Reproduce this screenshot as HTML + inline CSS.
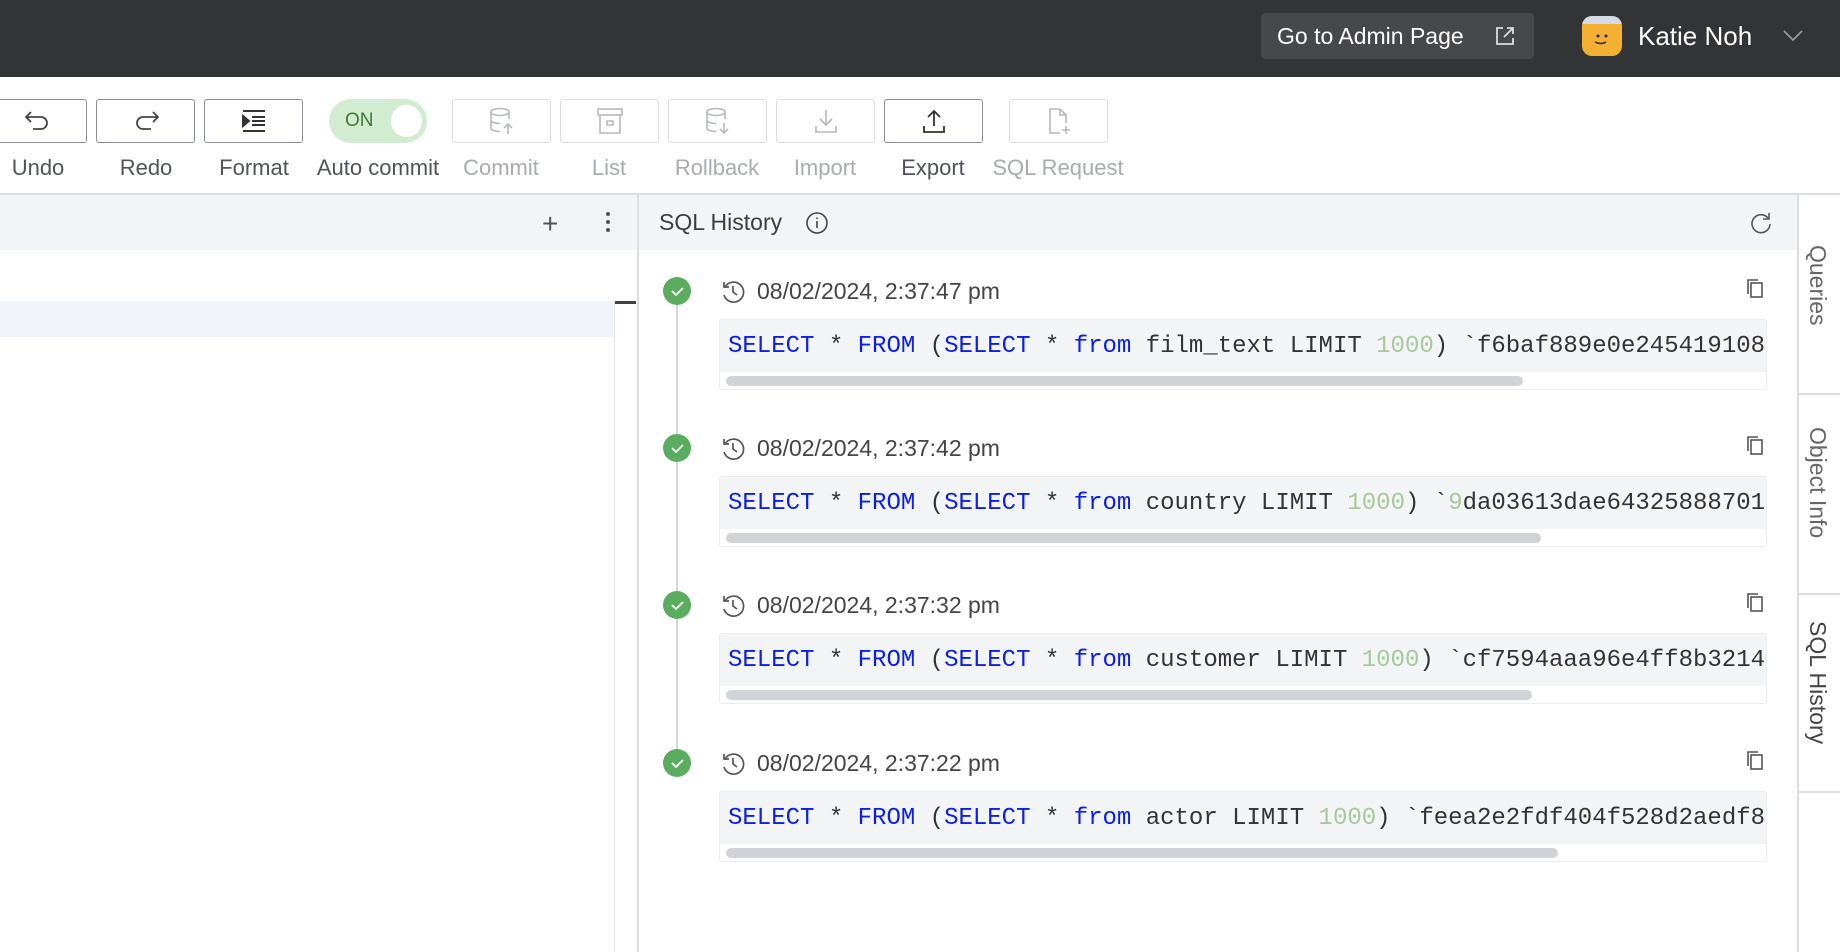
<!DOCTYPE html>
<html><head><meta charset="utf-8"><style>
*{box-sizing:border-box;margin:0;padding:0}
body{width:1840px;height:952px;overflow:hidden;background:#fff;font-family:"Liberation Sans",sans-serif;position:relative;color:#333}
.abs{position:absolute;white-space:nowrap}
.hdr{left:0;top:0;width:1840px;height:77px;background:#333436}
.btn{position:absolute;top:99px;width:99px;height:44px;border:1.5px solid #8a8d93;border-radius:3px;display:flex;align-items:center;justify-content:center}
.btn.dis{border-color:#dcdde0}
.lbl{position:absolute;top:155px;font-size:22px;color:#50535a;text-align:center;width:120px;white-space:nowrap}
.lbl.dis{color:#a8abb0}
.mono{font-family:"Liberation Mono",monospace;font-size:24px;white-space:nowrap}
.kw{color:#0a1ee8}.num{color:#a6c99a}
.date{font-size:23px;color:#444;line-height:28px}
</style></head><body>
<div class="abs hdr"></div>
<div class="abs" style="left:1261px;top:13px;width:273px;height:46px;background:#47484c;border-radius:4px;color:#fff;font-size:23px;line-height:46px;padding-left:16px">Go to Admin Page
<svg class="abs" style="left:233px;top:12px" width="22" height="22" viewBox="0 0 22 22" fill="none" stroke="#ddd" stroke-width="1.8"><path d="M9 3H3v16h16v-6M13 3h6v6M19 3l-9 9"/></svg></div>
<div class="abs" style="left:1582px;top:16px;width:40px;height:40px;border-radius:10px;background:#f3b033;overflow:hidden"><div style="height:8px;background:#d3dbe6"></div>
<svg class="abs" style="left:0;top:0" width="40" height="40"><circle cx="16" cy="20" r="1.5" fill="#222"/><circle cx="24" cy="20" r="1.5" fill="#222"/><path d="M13 26q6 3 11 0" stroke="#222" stroke-width="1.5" fill="none"/></svg></div>
<div class="abs" style="left:1638px;top:18px;color:#fff;font-size:26px;line-height:36px">Katie Noh</div>
<svg class="abs" style="left:1782px;top:28px" width="22" height="14" fill="none" stroke="#999" stroke-width="1.8"><path d="M2 3l9 9 9-9"/></svg>

<div class="btn" style="left:-12px"><svg width="30" height="26" fill="none" stroke="#444" stroke-width="1.8"><path d="M8 4L3 9l5 5M3 9h15a6 6 0 010 12h-8"/></svg></div>
<div class="btn" style="left:96px"><svg width="30" height="26" fill="none" stroke="#444" stroke-width="1.8"><path d="M22 4l5 5-5 5M27 9H12a6 6 0 000 12h8"/></svg></div>
<div class="btn" style="left:204px"><svg width="28" height="26" fill="none" stroke="#333" stroke-width="2"><path d="M3 3h22M12 9h13M12 13h13M12 17h13M3 23h22"/><path d="M3 8l6 5-6 5z" fill="#333"/></svg></div>
<div class="abs" style="left:329px;top:99px;width:98px;height:44px;border-radius:22px;background:#d2ecd2"><span class="abs" style="left:16px;top:11px;font-size:19px;color:#3b7a3b">ON</span><div class="abs" style="left:62px;top:6px;width:31px;height:32px;border-radius:16px;background:#fff"></div></div>
<div class="btn dis" style="left:452px"><svg width="28" height="30" fill="none" stroke="#b5b8bd" stroke-width="1.6"><ellipse cx="12" cy="6" rx="9" ry="3.5"/><path d="M3 6v16c0 2 4 3.5 9 3.5M21 6v7M3 14c0 2 4 3.5 9 3.5M20 28v-10M16 22l4-4 4 4"/></svg></div>
<div class="btn dis" style="left:560px"><svg width="28" height="30" fill="none" stroke="#b5b8bd" stroke-width="1.6"><rect x="2" y="3" width="24" height="6"/><path d="M4 9v18h20V9M11 15h6v4h-6z"/></svg></div>
<div class="btn dis" style="left:668px"><svg width="28" height="30" fill="none" stroke="#b5b8bd" stroke-width="1.6"><ellipse cx="12" cy="6" rx="9" ry="3.5"/><path d="M3 6v16c0 2 4 3.5 9 3.5M21 6v7M3 14c0 2 4 3.5 9 3.5M20 17v10M16 23l4 4 4-4"/></svg></div>
<div class="btn dis" style="left:776px"><svg width="28" height="30" fill="none" stroke="#b5b8bd" stroke-width="1.6"><path d="M14 4v15M8 13l6 6 6-6M4 20v6h20v-6"/></svg></div>
<div class="btn" style="left:884px"><svg width="28" height="30" fill="none" stroke="#333" stroke-width="1.8"><path d="M14 20V5M8 11l6-6 6 6M4 20v6h20v-6"/></svg></div>
<div class="btn dis" style="left:1009px"><svg width="28" height="30" fill="none" stroke="#b5b8bd" stroke-width="1.6"><path d="M15 27H5V3h10l6 6v8M15 3v6h6M21 20v8M17 24h8"/></svg></div>
<div class="lbl" style="left:-22px">Undo</div>
<div class="lbl" style="left:86px">Redo</div>
<div class="lbl" style="left:194px">Format</div>
<div class="lbl" style="left:308px;width:140px">Auto commit</div>
<div class="lbl dis" style="left:441px">Commit</div>
<div class="lbl dis" style="left:549px">List</div>
<div class="lbl dis" style="left:657px">Rollback</div>
<div class="lbl dis" style="left:765px">Import</div>
<div class="lbl" style="left:873px">Export</div>
<div class="lbl dis" style="left:978px;width:160px">SQL Request</div>
<div class="abs" style="left:0;top:193px;width:1840px;height:2px;background:#dcdde0"></div>

<div class="abs" style="left:0;top:195px;width:637px;height:55px;background:#f3f4f6"></div>
<div class="abs" style="left:542px;top:208px;font-size:28px;color:#555;font-weight:300">+</div>
<svg class="abs" style="left:603px;top:211px" width="10" height="24"><circle cx="5" cy="3" r="2" fill="#555"/><circle cx="5" cy="11" r="2" fill="#555"/><circle cx="5" cy="19" r="2" fill="#555"/></svg>
<div class="abs" style="left:0;top:301px;width:615px;height:36px;background:#f0f4f8"></div>
<div class="abs" style="left:614px;top:301px;width:1px;height:651px;background:#e3e4e7"></div>
<div class="abs" style="left:615px;top:301px;width:21px;height:3px;background:#444"></div>
<div class="abs" style="left:637px;top:195px;width:2px;height:757px;background:#dcdde0"></div>

<div class="abs" style="left:639px;top:195px;width:1158px;height:55px;background:#f3f4f6"></div>
<div class="abs" style="left:659px;top:209px;font-size:23px;color:#3a3d42">SQL History</div>
<svg class="abs" style="left:805px;top:211px" width="24" height="24" fill="none" stroke="#444" stroke-width="1.6"><circle cx="12" cy="12" r="10"/><path d="M12 10v7M12 6.5v1.5"/></svg>
<svg class="abs" style="left:1749px;top:210px" width="24" height="26" fill="none" stroke="#555" stroke-width="1.6"><path d="M19 8a9 9 0 10 2 6M20 3v6h-6"/></svg>
<div class="abs" style="left:676px;top:292px;width:2px;height:470px;background:#d5d6d9"></div>

<div class="abs" style="left:1797px;top:195px;width:2px;height:757px;background:#dcdde0"></div>
<div class="abs" style="left:1799px;top:195px;width:41px;height:757px;background:#fff"></div>
<div class="abs" style="left:1799px;top:393px;width:41px;height:2px;background:#dcdde0"></div>
<div class="abs" style="left:1799px;top:593px;width:41px;height:2px;background:#dcdde0"></div>
<div class="abs" style="left:1799px;top:791px;width:41px;height:2px;background:#dcdde0"></div>
<div class="abs" style="left:1804px;top:245px;writing-mode:vertical-rl;font-size:23px;color:#666">Queries</div>
<div class="abs" style="left:1804px;top:427px;writing-mode:vertical-rl;font-size:23px;color:#666">Object Info</div>
<div class="abs" style="left:1804px;top:621px;writing-mode:vertical-rl;font-size:23px;color:#444">SQL History</div>

<div class="abs" style="left:0;top:277px">
<div class="abs" style="left:663px;top:0;width:28px;height:28px;border-radius:14px;background:#5aac5e"><svg width="28" height="28"><path d="M9 14l4 4 7-7" stroke="#fff" stroke-width="1.8" fill="none"/></svg></div>
<svg class="abs" style="left:720px;top:2px" width="26" height="26" fill="none" stroke="#555" stroke-width="1.7"><path d="M5 8a10 10 0 11-1 8M4 3v5h5M13 7v6l4 3"/></svg>
<div class="abs date" style="left:757px;top:0">08/02/2024, 2:37:47 pm</div>
<svg class="abs" style="left:1745px;top:1px" width="20" height="22" fill="none" stroke="#555" stroke-width="1.6"><rect x="6" y="5" width="11" height="14"/><path d="M3 16V2h10"/></svg>
<div class="abs" style="left:719px;top:42px;width:1048px;height:71px;border:1px solid #ebecee;border-radius:3px;overflow:hidden"><div style="background:#f3f4f6;height:52px;padding:13px 0 0 8px" class="mono"><span class="kw">SELECT</span> * <span class="kw">FROM</span> (<span class="kw">SELECT</span> * <span class="kw">from</span> film_text LIMIT <span class="num">1000</span>) `f6baf889e0e245419108</div><div style="margin:4px 0 0 6px;width:797px;height:10px;border-radius:5px;background:#d2d3d7"></div></div>
</div>

<div class="abs" style="left:0;top:434px">
<div class="abs" style="left:663px;top:0;width:28px;height:28px;border-radius:14px;background:#5aac5e"><svg width="28" height="28"><path d="M9 14l4 4 7-7" stroke="#fff" stroke-width="1.8" fill="none"/></svg></div>
<svg class="abs" style="left:720px;top:2px" width="26" height="26" fill="none" stroke="#555" stroke-width="1.7"><path d="M5 8a10 10 0 11-1 8M4 3v5h5M13 7v6l4 3"/></svg>
<div class="abs date" style="left:757px;top:0">08/02/2024, 2:37:42 pm</div>
<svg class="abs" style="left:1745px;top:1px" width="20" height="22" fill="none" stroke="#555" stroke-width="1.6"><rect x="6" y="5" width="11" height="14"/><path d="M3 16V2h10"/></svg>
<div class="abs" style="left:719px;top:42px;width:1048px;height:71px;border:1px solid #ebecee;border-radius:3px;overflow:hidden"><div style="background:#f3f4f6;height:52px;padding:13px 0 0 8px" class="mono"><span class="kw">SELECT</span> * <span class="kw">FROM</span> (<span class="kw">SELECT</span> * <span class="kw">from</span> country LIMIT <span class="num">1000</span>) `<span class="num">9</span>da03613dae64325888701</div><div style="margin:4px 0 0 6px;width:815px;height:10px;border-radius:5px;background:#d2d3d7"></div></div>
</div>

<div class="abs" style="left:0;top:591px">
<div class="abs" style="left:663px;top:0;width:28px;height:28px;border-radius:14px;background:#5aac5e"><svg width="28" height="28"><path d="M9 14l4 4 7-7" stroke="#fff" stroke-width="1.8" fill="none"/></svg></div>
<svg class="abs" style="left:720px;top:2px" width="26" height="26" fill="none" stroke="#555" stroke-width="1.7"><path d="M5 8a10 10 0 11-1 8M4 3v5h5M13 7v6l4 3"/></svg>
<div class="abs date" style="left:757px;top:0">08/02/2024, 2:37:32 pm</div>
<svg class="abs" style="left:1745px;top:1px" width="20" height="22" fill="none" stroke="#555" stroke-width="1.6"><rect x="6" y="5" width="11" height="14"/><path d="M3 16V2h10"/></svg>
<div class="abs" style="left:719px;top:42px;width:1048px;height:71px;border:1px solid #ebecee;border-radius:3px;overflow:hidden"><div style="background:#f3f4f6;height:52px;padding:13px 0 0 8px" class="mono"><span class="kw">SELECT</span> * <span class="kw">FROM</span> (<span class="kw">SELECT</span> * <span class="kw">from</span> customer LIMIT <span class="num">1000</span>) `cf7594aaa96e4ff8b3214</div><div style="margin:4px 0 0 6px;width:806px;height:10px;border-radius:5px;background:#d2d3d7"></div></div>
</div>

<div class="abs" style="left:0;top:749px">
<div class="abs" style="left:663px;top:0;width:28px;height:28px;border-radius:14px;background:#5aac5e"><svg width="28" height="28"><path d="M9 14l4 4 7-7" stroke="#fff" stroke-width="1.8" fill="none"/></svg></div>
<svg class="abs" style="left:720px;top:2px" width="26" height="26" fill="none" stroke="#555" stroke-width="1.7"><path d="M5 8a10 10 0 11-1 8M4 3v5h5M13 7v6l4 3"/></svg>
<div class="abs date" style="left:757px;top:0">08/02/2024, 2:37:22 pm</div>
<svg class="abs" style="left:1745px;top:1px" width="20" height="22" fill="none" stroke="#555" stroke-width="1.6"><rect x="6" y="5" width="11" height="14"/><path d="M3 16V2h10"/></svg>
<div class="abs" style="left:719px;top:42px;width:1048px;height:71px;border:1px solid #ebecee;border-radius:3px;overflow:hidden"><div style="background:#f3f4f6;height:52px;padding:13px 0 0 8px" class="mono"><span class="kw">SELECT</span> * <span class="kw">FROM</span> (<span class="kw">SELECT</span> * <span class="kw">from</span> actor LIMIT <span class="num">1000</span>) `feea2e2fdf404f528d2aedf8</div><div style="margin:4px 0 0 6px;width:832px;height:10px;border-radius:5px;background:#d2d3d7"></div></div>
</div>
</body></html>
